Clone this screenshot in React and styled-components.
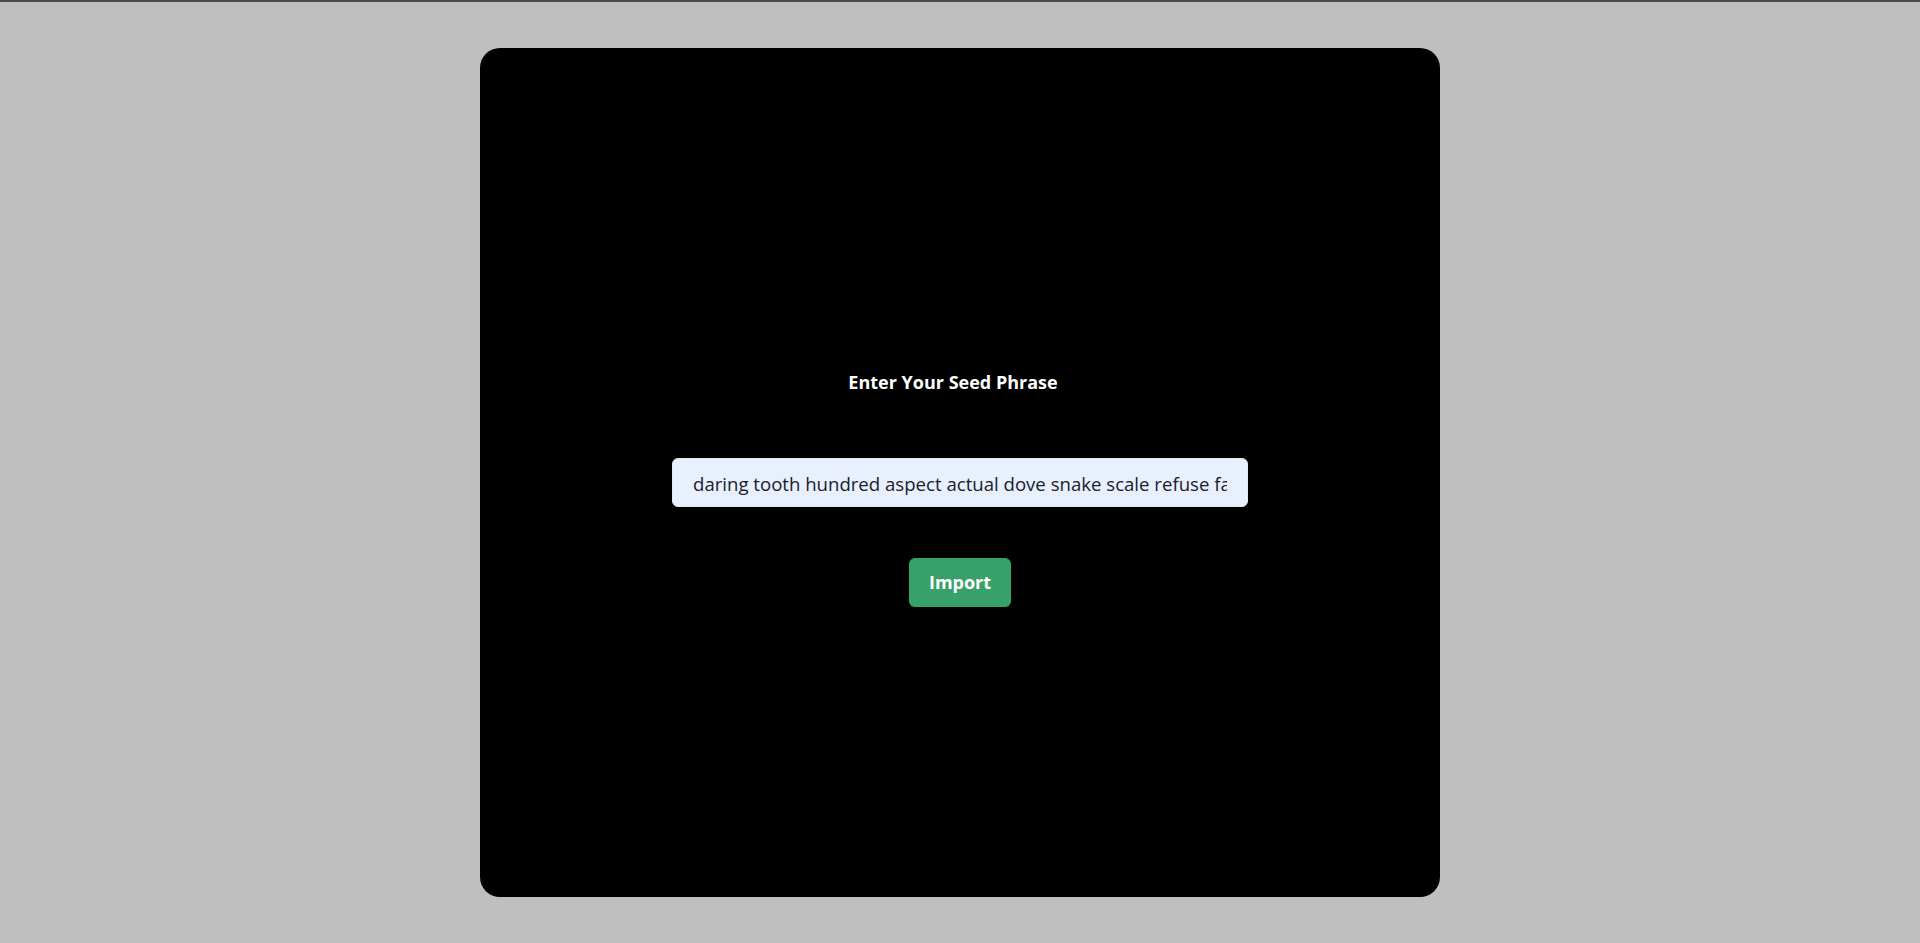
import styled, { createGlobalStyle } from "styled-components";

const GlobalStyle = createGlobalStyle`
  * {
    box-sizing: border-box;
  }

  html, body {
    margin: 0;
    padding: 0;
    background: #bfbfbf;
  }

  body {
    border-top: 2px solid #4a4a4a;
    font-family: "Open Sans", "Noto Sans", sans-serif;
  }
`;

const Page = styled.main`
  min-height: calc(100vh - 2px);
  display: flex;
  align-items: center;
  justify-content: center;
`;

const Card = styled.section`
  width: 960px;
  height: 90vh;
  background: #000;
  border-radius: 20px;
  display: flex;
  flex-direction: column;
  align-items: center;
  justify-content: center;
  padding-top: 30px;
`;

const Title = styled.h2`
  margin: 0 0 62px;
  padding-right: 14px;
  color: #fff;
  font-size: 18px;
  font-weight: 700;
  line-height: 27px;
`;

const SeedInput = styled.input`
  width: 576px;
  height: 49px;
  padding: 2px 20px 0;
  border: 1px solid #e2e8f0;
  border-radius: 6px;
  background: #e8f0fe;
  color: #1a202c;
  font-family: inherit;
  font-size: 18.6px;
  outline: none;
`;

const ImportButton = styled.button`
  margin-top: 51px;
  height: 49px;
  padding: 0 20px;
  border: none;
  border-radius: 6px;
  background: #38a169;
  color: #fff;
  font-family: inherit;
  font-size: 18px;
  font-weight: 700;
  cursor: pointer;

  &:hover {
    background: #2f855a;
  }
`;

export default function App() {
  return (
    <>
      <GlobalStyle />
      <Page>
        <Card>
          <Title>Enter Your Seed Phrase</Title>
          <SeedInput
            type="text"
            defaultValue="daring tooth hundred aspect actual dove snake scale refuse faith mirror rocket"
          />
          <ImportButton>Import</ImportButton>
        </Card>
      </Page>
    </>
  );
}
